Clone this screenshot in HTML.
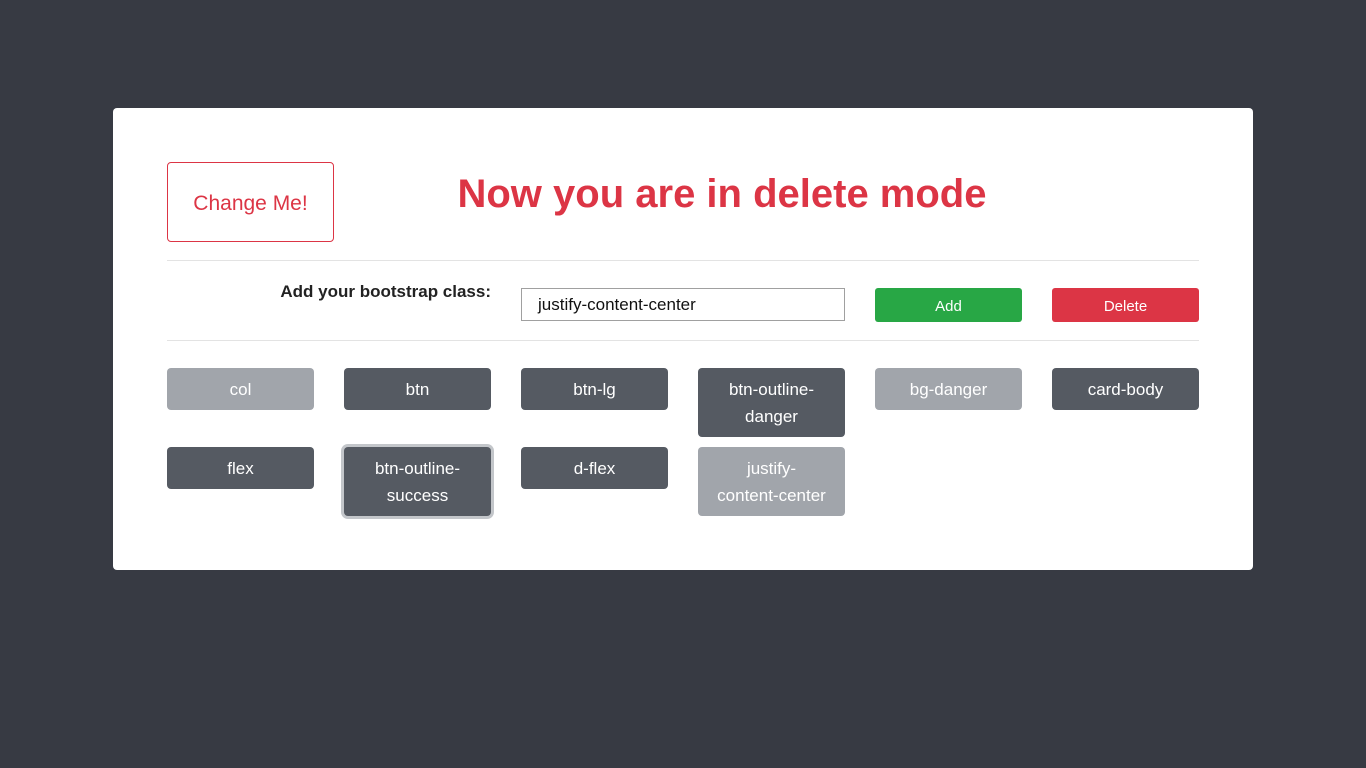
<!DOCTYPE html>
<html><head><meta charset="utf-8"><style>
body{margin:0;width:1366px;height:768px;background:#373a43;font-family:"Segoe UI","Liberation Sans",sans-serif;position:relative;overflow:hidden}
.card{position:absolute;left:113px;top:108px;width:1140px;height:462px;background:#fff;border-radius:4px}
.a{position:absolute;box-sizing:border-box}
.chg{left:167px;top:162px;width:167px;height:80px;border:1px solid #dc3545;border-radius:4px;color:#dc3545;font-size:21px;display:flex;align-items:center;justify-content:center;padding-top:3px}
h1{position:absolute;left:334px;width:776px;top:166px;margin:0;text-align:center;color:#dc3545;font-size:40px;font-weight:bold;line-height:56px}
.hr{left:167px;width:1032px;height:1px;background:#e3e3e3}
.lbl{left:167px;width:324px;top:282px;text-align:right;font-weight:bold;font-size:17px;color:#222}
.inp{left:521px;top:288px;width:324px;height:33px;border:1px solid #a0a0a0;font-size:17px;padding:6px 16px;color:#111}
.b{height:34px;top:288px;width:147px;border-radius:3px;color:#fff;font-size:15px;display:flex;align-items:center;justify-content:center;padding-top:2px}
.t{width:147px;border-radius:4px;color:#fff;font-size:17px;line-height:27px;text-align:center;padding:8px 4px;background:#555a62}
.l{background:#a1a5ab}
.sel{box-shadow:0 0 0 3px #c3c6ca}
</style></head><body>
<div class="card"></div>
<div class="a chg">Change Me!</div>
<h1>Now you are in delete mode</h1>
<div class="a hr" style="top:260px"></div>
<div class="a lbl">Add your bootstrap class:</div>
<div class="a inp">justify-content-center</div>
<div class="a b" style="left:875px;background:#28a745">Add</div>
<div class="a b" style="left:1052px;background:#dc3545">Delete</div>
<div class="a hr" style="top:340px"></div>
<div class="a t l" style="left:167px;top:368px;height:42px;padding-top:8px">col</div>
<div class="a t" style="left:344px;top:368px;height:42px;padding-top:8px">btn</div>
<div class="a t" style="left:521px;top:368px;height:42px;padding-top:8px">btn-lg</div>
<div class="a t" style="left:698px;top:368px;height:69px;padding-top:8px">btn-outline-<br>danger</div>
<div class="a t l" style="left:875px;top:368px;height:42px;padding-top:8px">bg-danger</div>
<div class="a t" style="left:1052px;top:368px;height:42px;padding-top:8px">card-body</div>
<div class="a t" style="left:167px;top:447px;height:42px;padding-top:8px">flex</div>
<div class="a t sel" style="left:344px;top:447px;height:69px;padding-top:8px">btn-outline-<br>success</div>
<div class="a t" style="left:521px;top:447px;height:42px;padding-top:8px">d-flex</div>
<div class="a t l" style="left:698px;top:447px;height:69px;padding-top:8px">justify-<br>content-center</div>
</body></html>
